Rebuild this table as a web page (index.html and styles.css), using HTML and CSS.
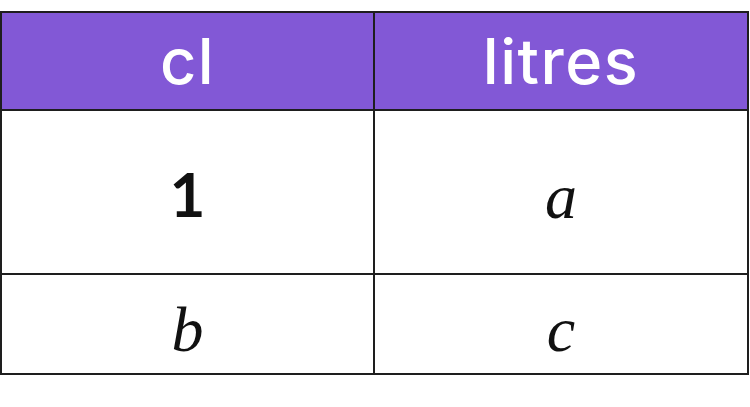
FILE: index.html
```html
<!DOCTYPE html>
<html>
<head>
<meta charset="utf-8">
<link rel="stylesheet" href="styles.css">
</head>
<body>
<div class="table">
  <div class="cell head">cl</div>
  <div class="cell head">litres</div>
  <div class="cell num">1</div>
  <div class="cell var">a</div>
  <div class="cell var low">b</div>
  <div class="cell var low">c</div>
</div>
</body>
</html>
```
FILE: styles.css
```css
html, body {
  margin: 0;
  padding: 0;
  background: #fff;
}
.table {
  margin-top: 11px;
  width: 749px;
  box-sizing: border-box;
  display: grid;
  grid-template-columns: 371px 372px;
  grid-template-rows: 96px 162px 98px;
  gap: 2px;
  padding: 2px;
  background: #1e1e1e;
}
.cell {
  background: #fff;
  display: flex;
  align-items: center;
  justify-content: center;
  color: #111;
}
.head {
  background: #8258d6;
  color: #fff;
  font-family: Inter, sans-serif;
  font-weight: 500;
  font-size: 63px;
  letter-spacing: 1.5px;
}
.num {
  font-family: Lato, sans-serif;
  font-weight: 700;
  font-size: 62px;
  padding-top: 2px;
}
.var {
  font-family: "Liberation Serif", serif;
  font-style: italic;
  font-size: 64px;
  padding-top: 10px;
}
.var.low {
  padding-top: 12px;
}
```
